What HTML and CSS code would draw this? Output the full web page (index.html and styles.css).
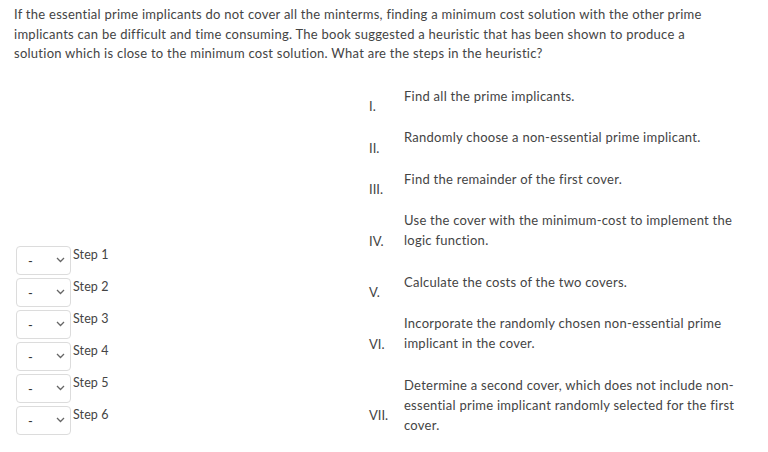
FILE: index.html
```html
<!DOCTYPE html>
<html>
<head>
<meta charset="utf-8">
<link rel="stylesheet" href="styles.css">
</head>
<body>
<div class="page">
  <p class="question">If the essential prime implicants do not cover all the minterms, finding a minimum cost solution with the other prime implicants can be difficult and time consuming. The book suggested a heuristic that has been shown to produce a solution which is close to the minimum cost solution. What are the steps in the heuristic?</p>
  <div class="match">
    <div class="selects">
      <div class="pick"><div class="select"><span class="dash">-</span><svg class="chev" width="9" height="6" viewBox="0 0 9 6"><path d="M1 1 L4.5 4.5 L8 1" fill="none" stroke="#666" stroke-width="1.3"/></svg></div><span class="label">Step 1</span></div>
      <div class="pick"><div class="select"><span class="dash">-</span><svg class="chev" width="9" height="6" viewBox="0 0 9 6"><path d="M1 1 L4.5 4.5 L8 1" fill="none" stroke="#666" stroke-width="1.3"/></svg></div><span class="label">Step 2</span></div>
      <div class="pick"><div class="select"><span class="dash">-</span><svg class="chev" width="9" height="6" viewBox="0 0 9 6"><path d="M1 1 L4.5 4.5 L8 1" fill="none" stroke="#666" stroke-width="1.3"/></svg></div><span class="label">Step 3</span></div>
      <div class="pick"><div class="select"><span class="dash">-</span><svg class="chev" width="9" height="6" viewBox="0 0 9 6"><path d="M1 1 L4.5 4.5 L8 1" fill="none" stroke="#666" stroke-width="1.3"/></svg></div><span class="label">Step 4</span></div>
      <div class="pick"><div class="select"><span class="dash">-</span><svg class="chev" width="9" height="6" viewBox="0 0 9 6"><path d="M1 1 L4.5 4.5 L8 1" fill="none" stroke="#666" stroke-width="1.3"/></svg></div><span class="label">Step 5</span></div>
      <div class="pick"><div class="select"><span class="dash">-</span><svg class="chev" width="9" height="6" viewBox="0 0 9 6"><path d="M1 1 L4.5 4.5 L8 1" fill="none" stroke="#666" stroke-width="1.3"/></svg></div><span class="label">Step 6</span></div>
    </div>
    <div class="options">
      <div class="opt"><span class="num">I.</span><span class="txt">Find all the prime implicants.</span></div>
      <div class="opt"><span class="num">II.</span><span class="txt">Randomly choose a non-essential prime implicant.</span></div>
      <div class="opt"><span class="num">III.</span><span class="txt">Find the remainder of the first cover.</span></div>
      <div class="opt"><span class="num">IV.</span><span class="txt">Use the cover with the minimum-cost to implement the logic function.</span></div>
      <div class="opt"><span class="num">V.</span><span class="txt">Calculate the costs of the two covers.</span></div>
      <div class="opt"><span class="num">VI.</span><span class="txt">Incorporate the randomly chosen non-essential prime implicant in the cover.</span></div>
      <div class="opt"><span class="num">VII.</span><span class="txt">Determine a second cover, which does not include non-essential prime implicant randomly selected for the first cover.</span></div>
    </div>
  </div>
</div>
</body>
</html>
```

FILE: styles.css
```css
html, body {
  margin: 0;
  padding: 0;
  background: #fff;
}
body {
  font-family: Lato, "Open Sans", sans-serif;
  color: #444;
  font-size: 13px;
  letter-spacing: 0.26px;
}
.page {
  padding: 5px 14px 0 14px;
}
.question {
  margin: 0;
  line-height: 19.5px;
  width: 712px;
}
.match {
  display: flex;
  margin-top: 22px;
}
.selects {
  width: 352px;
  display: flex;
  flex-direction: column;
  gap: 3px;
  padding-top: 160px;
  padding-left: 2px;
  box-sizing: border-box;
}
.pick {
  display: flex;
  align-items: flex-start;
}
.select {
  width: 55px;
  height: 29px;
  box-sizing: border-box;
  border: 1px solid #dcdcdc;
  border-radius: 4px;
  display: flex;
  align-items: center;
  justify-content: space-between;
  padding: 2px 5px 0 11px;
}
.dash {
  font-size: 13px;
  line-height: 1;
  color: #333;
}
.chev {
  display: block;
  margin-top: -2px;
}
.label {
  margin-left: 2px;
  font-size: 12.5px;
  line-height: 18px;
  color: #444;
  letter-spacing: 0.1px;
}
.options {
  display: flex;
  flex-direction: column;
  width: 380px;
}
.opt {
  display: flex;
  align-items: center;
}
.num {
  width: 38px;
  padding-left: 3px;
  box-sizing: border-box;
  font-size: 13px;
  color: #444;
  letter-spacing: 0;
}
.txt {
  width: 338px;
  line-height: 20px;
  padding-bottom: 21.5px;
  font-size: 13px;
}
```
